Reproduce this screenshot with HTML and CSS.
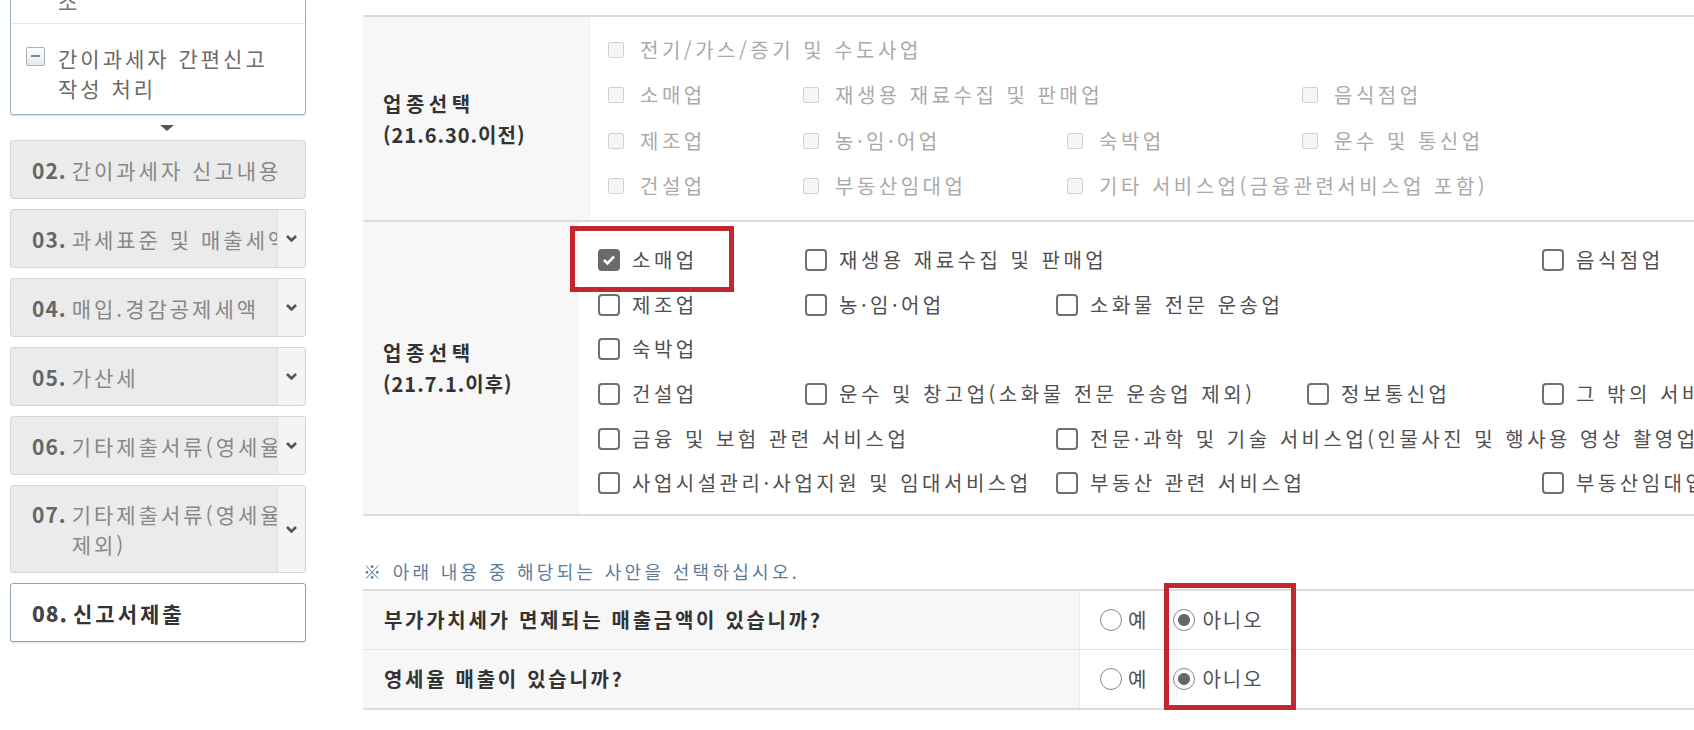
FILE: index.html
```html
<!DOCTYPE html>
<html lang="ko">
<head>
  <meta charset="UTF-8">
  <title>간이과세자 신고서 작성</title>
  <link rel="stylesheet" href="styles.css">
</head>
<body>
  <div class="page">
    <nav class="steps">
      <div class="tree-box">
        <div class="tree-prev">소</div>
        <div class="tree-item">
          <span class="tree-toggle"></span>
          <span class="tree-text">간이과세자 간편신고<br>작성 처리</span>
        </div>
      </div>
      <div class="step-arrow"><span></span></div>
      <div class="step first">
        <span class="step-label"><b>02.</b><span>간이과세자 신고내용</span></span>
      </div>
      <div class="step">
        <span class="step-label"><b>03.</b><span>과세표준 및 매출세액</span></span>
        <span class="step-toggle"><svg width="11" height="7" viewBox="0 0 11 7"><polyline points="1,1 5.5,5.5 10,1"/></svg></span>
      </div>
      <div class="step">
        <span class="step-label"><b>04.</b><span>매입.경감공제세액</span></span>
        <span class="step-toggle"><svg width="11" height="7" viewBox="0 0 11 7"><polyline points="1,1 5.5,5.5 10,1"/></svg></span>
      </div>
      <div class="step">
        <span class="step-label"><b>05.</b><span>가산세</span></span>
        <span class="step-toggle"><svg width="11" height="7" viewBox="0 0 11 7"><polyline points="1,1 5.5,5.5 10,1"/></svg></span>
      </div>
      <div class="step">
        <span class="step-label"><b>06.</b><span>기타제출서류(영세율적용)</span></span>
        <span class="step-toggle"><svg width="11" height="7" viewBox="0 0 11 7"><polyline points="1,1 5.5,5.5 10,1"/></svg></span>
      </div>
      <div class="step tall">
        <span class="step-label"><b>07.</b><span>기타제출서류(영세율<br>제외)</span></span>
        <span class="step-toggle"><svg width="11" height="7" viewBox="0 0 11 7"><polyline points="1,1 5.5,5.5 10,1"/></svg></span>
      </div>
      <div class="step current">
        <span class="step-label"><b>08.</b><span>신고서제출</span></span>
      </div>
    </nav>

    <main class="content">
      <div class="biz biz-old">
        <div class="biz-head"><span>업종선택<br><span class="date">(21.6.30.이전)</span></span></div>
        <div class="biz-list">
          <label class="opt all"><span class="box"></span>전기/가스/증기 및 수도사업</label>
          <label class="opt c1"><span class="box"></span>소매업</label>
          <label class="opt c2"><span class="box"></span>재생용 재료수집 및 판매업</label>
          <label class="opt c4"><span class="box"></span>음식점업</label>
          <label class="opt c1"><span class="box"></span>제조업</label>
          <label class="opt c2"><span class="box"></span>농·임·어업</label>
          <label class="opt c3"><span class="box"></span>숙박업</label>
          <label class="opt c4"><span class="box"></span>운수 및 통신업</label>
          <label class="opt c1"><span class="box"></span>건설업</label>
          <label class="opt c2"><span class="box"></span>부동산임대업</label>
          <label class="opt c3"><span class="box"></span>기타 서비스업(금융관련서비스업 포함)</label>
        </div>
      </div>

      <div class="biz biz-new">
        <div class="biz-head"><span>업종선택<br><span class="date">(21.7.1.이후)</span></span></div>
        <div class="biz-list">
          <label class="opt c1 marked">
            <span class="box on"><svg width="14" height="12" viewBox="0 0 14 12"><polyline points="2,6 5.5,9.5 12,2.5"/></svg></span>소매업
            <span class="mark mark-retail"></span>
          </label>
          <label class="opt c2"><span class="box"></span>재생용 재료수집 및 판매업</label>
          <label class="opt c5"><span class="box"></span>음식점업</label>
          <label class="opt c1"><span class="box"></span>제조업</label>
          <label class="opt c2"><span class="box"></span>농·임·어업</label>
          <label class="opt c3"><span class="box"></span>소화물 전문 운송업</label>
          <label class="opt c1"><span class="box"></span>숙박업</label>
          <label class="opt c1"><span class="box"></span>건설업</label>
          <label class="opt c2"><span class="box"></span>운수 및 창고업(소화물 전문 운송업 제외)</label>
          <label class="opt c4"><span class="box"></span>정보통신업</label>
          <label class="opt c5"><span class="box"></span>그 밖의 서비스업</label>
          <label class="opt c1"><span class="box"></span>금융 및 보험 관련 서비스업</label>
          <label class="opt c3"><span class="box"></span>전문·과학 및 기술 서비스업(인물사진 및 행사용 영상 촬영업 제외)</label>
          <label class="opt c1"><span class="box"></span>사업시설관리·사업지원 및 임대서비스업</label>
          <label class="opt c3"><span class="box"></span>부동산 관련 서비스업</label>
          <label class="opt c5"><span class="box"></span>부동산임대업</label>
        </div>
      </div>

      <p class="notice">※ 아래 내용 중 해당되는 사안을 선택하십시오.</p>

      <div class="ask">
        <div class="ask-row">
          <div class="ask-q">부가가치세가 면제되는 매출금액이 있습니까?</div>
          <div class="ask-a">
            <label class="choice"><span class="rd"></span>예</label>
            <label class="choice"><span class="rd on"></span>아니오</label>
          </div>
        </div>
        <div class="ask-row">
          <div class="ask-q">영세율 매출이 있습니까?</div>
          <div class="ask-a">
            <label class="choice"><span class="rd"></span>예</label>
            <label class="choice"><span class="rd on"></span>아니오</label>
          </div>
        </div>
        <span class="mark mark-answer"></span>
      </div>
    </main>
  </div>
</body>
</html>
```

FILE: styles.css
```css
html, body {
  margin: 0;
  overflow: hidden;
  background: #fff;
}

body {
  font-family: "Noto Sans CJK KR", "Noto Sans", sans-serif;
  font-size: 20px;
  letter-spacing: 2px;
  line-height: 30px;
  color: #505050;
}

.page {
  display: flex;
  align-items: flex-start;
}

/* left step menu */
.steps {
  width: 296px;
  flex: none;
  margin: -40px 0 0 10px;
  font-size: 21px;
  letter-spacing: 3px;
}

.tree-box {
  background: #fff;
  border: 1px solid #9fb1c6;
  border-radius: 3px;
  box-shadow: 0 1px 1px rgba(0, 0, 0, 0.15);
}

.tree-prev {
  height: 63px;
  box-sizing: border-box;
  padding: 25px 0 0 47px;
  border-bottom: 1px solid #e6e6e6;
  color: #777;
}

.tree-item {
  display: flex;
  align-items: flex-start;
  padding: 19px 4px 11px 15px;
  color: #6a6a6a;
  white-space: nowrap;
}

.tree-toggle {
  position: relative;
  flex: none;
  width: 19px;
  height: 19px;
  margin: 4px 13px 0 0;
  box-sizing: border-box;
  border: 1px solid #a9b1bb;
  border-radius: 2px;
  background: linear-gradient(#fff, #e6e9ed);
}

.tree-toggle::after {
  content: "";
  position: absolute;
  left: 4px;
  right: 4px;
  top: 7px;
  height: 2px;
  background: #7d8aa0;
}

.step-arrow {
  height: 25px;
  display: flex;
  align-items: center;
  justify-content: center;
}

.step-arrow span {
  width: 0;
  height: 0;
  margin: 0 0 0 18px;
  border-left: 7px solid transparent;
  border-right: 7px solid transparent;
  border-top: 6px solid #555;
}

.step {
  display: flex;
  min-height: 59px;
  margin-top: 10px;
  box-sizing: border-box;
  background: #ebebeb;
  border: 1px solid #d6d6d6;
  border-radius: 3px;
  color: #888;
}

.step.first {
  margin-top: 0;
}

.step.tall .step-label {
  align-items: flex-start;
  padding-top: 13px;
  padding-bottom: 13px;
}

.step-label {
  flex: 1;
  min-width: 0;
  display: flex;
  align-items: center;
  padding-left: 21px;
  overflow: hidden;
  white-space: nowrap;
}

.step-label b {
  flex: none;
  margin-right: 5px;
  letter-spacing: 1px;
  color: #666;
}

.step-toggle {
  flex: none;
  width: 27px;
  display: flex;
  align-items: center;
  justify-content: center;
  background: #f4f4f4;
  border-left: 1px solid #e2e2e2;
  border-radius: 0 3px 3px 0;
}

.step-toggle polyline {
  fill: none;
  stroke: #555;
  stroke-width: 2.6;
}

.step.current {
  background: #fff;
  border-color: #8fa2ba;
  box-shadow: 0 1px 1px rgba(0, 0, 0, 0.12);
  color: #333;
  font-weight: bold;
}

.step.current b {
  color: #444;
}

/* main form */
.content {
  flex: 1;
  min-width: 0;
  margin-left: 57px;
  padding-top: 15px;
}

.biz {
  display: grid;
  grid-template-columns: 227px 1fr;
  border-top: 2px solid #dcdcdc;
}

.biz-new {
  grid-template-columns: 215px 1fr;
  border-bottom: 2px solid #dcdcdc;
}

.biz-head {
  display: flex;
  align-items: center;
  padding-left: 20px;
  background: #f7f7f7;
  border-right: 1px solid #efefef;
  font-weight: bold;
  line-height: 31px;
  color: #333;
  letter-spacing: 4.5px;
}

.biz-head .date {
  letter-spacing: 1px;
}

.biz-list {
  display: grid;
  grid-template-columns: 195px 264px 235px 1fr;
  grid-auto-rows: 45.5px;
  padding: 10px 0 11px 18px;
}

.biz-new .biz-list {
  grid-template-columns: 207px 251px 251px 235px 1fr;
  grid-auto-rows: 44.6px;
  padding: 16px 0 8px 20px;
}

.opt {
  display: flex;
  align-items: center;
  white-space: nowrap;
  letter-spacing: 3.5px;
}

.all { grid-column: 1 / -1; }
.c1 { grid-column-start: 1; }
.c2 { grid-column-start: 2; }
.c3 { grid-column-start: 3; }
.c4 { grid-column-start: 4; }
.c5 { grid-column-start: 5; }

.box {
  flex: none;
  display: flex;
  align-items: center;
  justify-content: center;
  box-sizing: border-box;
}

.biz-old .opt {
  color: #aaa;
}

.biz-old .box {
  width: 16px;
  height: 16px;
  margin-right: 16px;
  border: 1px solid #d2d2d2;
  border-radius: 2px;
  background: #f5f5f5;
}

.biz-new .box {
  width: 22px;
  height: 22px;
  margin-right: 12px;
  border: 2px solid #707070;
  border-radius: 4px;
  background: #fff;
}

.biz-new .box.on {
  background: #6a6a6a;
  border-color: #6a6a6a;
}

.box.on polyline {
  fill: none;
  stroke: #fff;
  stroke-width: 2.6;
}

.marked {
  position: relative;
}

.mark {
  position: absolute;
  box-sizing: border-box;
  border: 5px solid #c1272d;
  pointer-events: none;
}

.mark-retail {
  left: -28px;
  top: -12px;
  width: 164px;
  height: 66px;
}

.notice {
  margin: 40px 0 0;
  font-size: 18px;
  letter-spacing: 3.3px;
  color: #5c7b9b;
}

.ask {
  position: relative;
  margin-top: 3px;
  border-top: 2px solid #dcdcdc;
  border-bottom: 2px solid #dcdcdc;
}

.ask-row {
  display: grid;
  grid-template-columns: 717px 1fr;
  height: 58px;
}

.ask-row + .ask-row {
  border-top: 1px solid #e4e4e4;
}

.ask-q {
  display: flex;
  align-items: center;
  padding-left: 21px;
  background: #f7f7f7;
  border-right: 1px solid #ececec;
  font-weight: bold;
  letter-spacing: 2.7px;
  color: #333;
}

.ask-a {
  display: flex;
  align-items: center;
  padding-left: 20px;
}

.choice {
  display: flex;
  align-items: center;
  margin-right: 25px;
}

.rd {
  width: 22px;
  height: 22px;
  margin-right: 6px;
  box-sizing: border-box;
  border: 1.5px solid #888;
  border-radius: 50%;
  background: #fff;
}

.rd.on {
  margin-right: 7px;
  background: radial-gradient(circle, #666 0 5.5px, #fff 6.5px);
}

.mark-answer {
  left: 801px;
  top: -8px;
  width: 132px;
  height: 127px;
}
```
